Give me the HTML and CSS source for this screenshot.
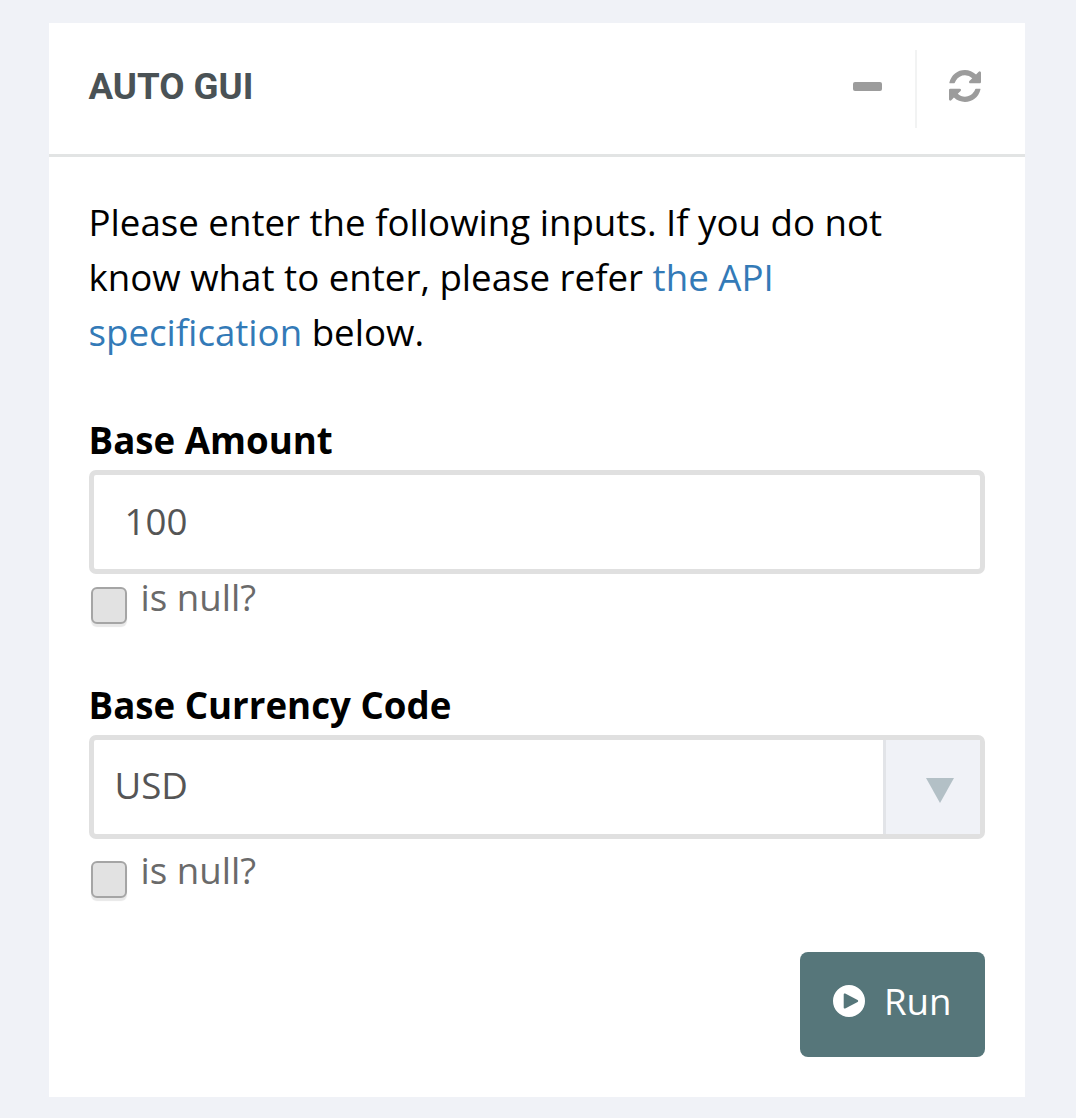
FILE: index.html
```html
<!DOCTYPE html>
<html lang="en">
<head>
<meta charset="utf-8">
<title>Auto GUI</title>
<link rel="stylesheet" href="styles.css">
</head>
<body>
<main class="card">
  <header class="card-head">
    <h1 class="title">AUTO GUI</h1>
    <div class="tools">
      <button class="tool tool-min" type="button" aria-label="Minimize"><span class="minus"></span></button>
      <button class="tool tool-refresh" type="button" aria-label="Refresh">
        <svg class="refresh" viewBox="128 128 1536 1536" aria-hidden="true"><path d="M1639 1056q0 5-1 7-64 268-268 434.5t-478 166.5q-146 0-282.5-55t-243.5-157l-129 129q-19 19-45 19t-45-19-19-45v-448q0-26 19-45t45-19h448q26 0 45 19t19 45-19 45l-137 137q71 66 161 102t187 36q134 0 250-65t186-179q11-17 53-117 8-23 30-23h192q13 0 22.5 9.5t9.5 22.5zm25-800v448q0 26-19 45t-45 19h-448q-26 0-45-19t-19-45 19-45l138-138q-148-137-349-137-134 0-250 65t-186 179q-11 17-53 117-8 23-30 23h-199q-13 0-22.5-9.5t-9.5-22.5v-7q65-268 270-434.5t480-166.5q146 0 284 55.5t245 156.5l130-129q19-19 45-19t45 19 19 45z"/></svg>
      </button>
    </div>
  </header>
  <form class="card-body">
    <p class="intro">Please enter the following inputs. If you do not know what to enter, please refer <a href="#spec">the API specification</a> below.</p>

    <div class="field">
      <label class="label" for="amount">Base Amount</label>
      <input class="input" id="amount" type="text" value="100">
      <label class="null-row"><input class="check" type="checkbox"><span class="null-text">is null?</span></label>
    </div>

    <div class="field field-second">
      <label class="label" for="currency">Base Currency Code</label>
      <div class="select">
        <span class="select-value" id="currency">USD</span>
        <span class="select-arrow"><span class="triangle"></span></span>
      </div>
      <label class="null-row null-row-low"><input class="check" type="checkbox"><span class="null-text">is null?</span></label>
    </div>

    <div class="actions">
      <button class="run" type="button">
        <svg class="play" viewBox="0 0 32 32" aria-hidden="true"><path fill-rule="evenodd" d="M16 0a16 16 0 1 1 0 32a16 16 0 1 1 0-32zM12.2 8.6c-.8-.5-1.5 0-1.5.9v13c0 .9.7 1.4 1.5.9l12.4-6.5c.8-.5.8-1.3 0-1.8z"/></svg>
        <span>Run</span>
      </button>
    </div>
  </form>
</main>
</body>
</html>
```
FILE: styles.css
```css
* { box-sizing: border-box; }
html, body { margin: 0; padding: 0; }
body {
  background: #f0f2f7;
  font-family: "Open Sans", sans-serif;
  padding: 23px 51px 21px 49px;
  color: #000;
}
.card { background: #fff; display: flex; flex-direction: column; height: 1074px; }
.card-head {
  height: 134px;
  border-bottom: 3px solid #e2e4e4;
  display: flex;
  align-items: center;
  justify-content: space-between;
  padding: 0 44px 4px 39.5px;
}
.title {
  margin: 0;
  font-family: Roboto, sans-serif;
  font-weight: 700;
  font-size: 36.67px;
  line-height: 40px;
  color: #4a5255;
}
.tools { display: flex; align-items: center; margin-top: 4px; }
.tool {
  background: none;
  border: 0;
  padding: 0 0 4px;
  display: flex;
  align-items: center;
  height: 78px;
}
.tool-min { padding-right: 33px; border-right: 2px solid #f2f3f3; }
.tool-refresh { padding-left: 32px; padding-bottom: 5px; }
.minus { display: block; width: 29px; height: 9px; border-radius: 2px; background: #9c9c9c; }
.refresh { display: block; width: 32px; height: 32px; fill: #9c9c9c; }
.card-body { padding: 38px 40px 40px 39.5px; display: flex; flex-direction: column; flex: 1; }
.intro { margin: 0; padding-right: 4px; font-size: 36.67px; line-height: 55px; }
.intro a { color: #337ab7; text-decoration: none; }
.field { margin-top: 57px; display: flex; flex-direction: column; }
.field-second { margin-top: 50px; }
.label { font-weight: 700; font-size: 36.67px; line-height: 46px; margin-bottom: 7px; }
.input {
  display: block;
  width: 100%;
  height: 104px;
  border: 5px solid #e0e0e0;
  border-radius: 7px;
  padding: 0 31px 2px;
  background: #fff;
  font: 36.67px "Open Sans", sans-serif;
  color: #555;
  outline: 0;
}
.null-row { display: flex; align-items: flex-start; height: 58px; }
.null-row-low { margin-top: 9px; }
.null-row-low .null-text { margin-top: -1px; }
.check {
  appearance: none;
  width: 36px;
  height: 37px;
  margin: 13px 14px 0 2px;
  border: 2px solid #a5a5a5;
  border-radius: 6px;
  background: #e2e2e2;
  box-shadow: 0 3px 1px #e8e8e8;
  flex: none;
}
.null-text { font-size: 36.67px; line-height: 46px; color: #6a6a6a; }
.select {
  height: 104px;
  border: 5px solid #e0e0e0;
  border-radius: 7px;
  display: flex;
  align-items: stretch;
  background: #fff;
}
.select-value { flex: 1; padding: 0 21px; font-size: 36.67px; line-height: 90px; color: #555; }
.select-arrow {
  width: 97px;
  border-left: 3px solid #e2e4e8;
  background: #f0f2f7;
  display: flex;
  align-items: center;
  justify-content: center;
  padding-left: 14px;
}
.triangle {
  width: 0;
  height: 0;
  margin-top: 6px;
  border-left: 14px solid transparent;
  border-right: 14px solid transparent;
  border-top: 25px solid #b3c0c6;
}
.actions { margin-top: auto; display: flex; justify-content: flex-end; }
.run {
  width: 185.5px;
  height: 105px;
  border: 0;
  border-radius: 8px;
  padding: 0 0 7px;
  background: #56767a;
  color: #fff;
  font: 36.67px "Open Sans", sans-serif;
  display: flex;
  align-items: center;
  justify-content: center;
  gap: 19px;
}
.play { width: 32px; height: 32px; fill: #fff; display: block; }
```
